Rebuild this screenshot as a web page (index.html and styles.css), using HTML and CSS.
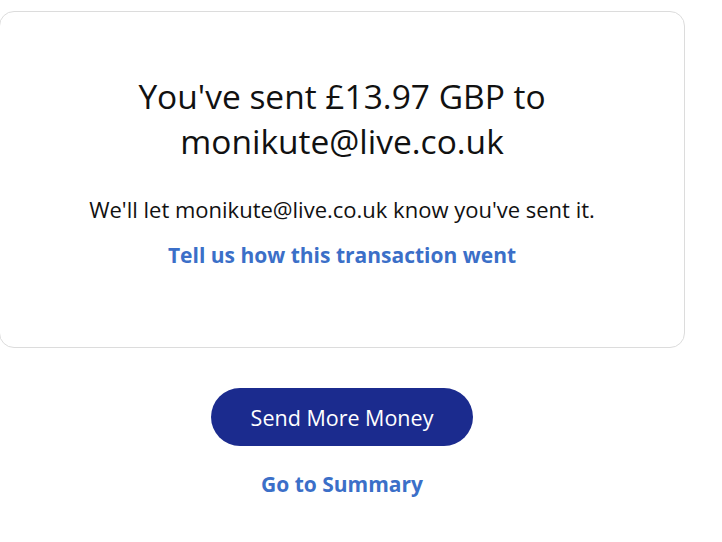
FILE: index.html
```html
<!DOCTYPE html>
<html lang="en">
<head>
<meta charset="utf-8">
<title>Sent</title>
<link rel="stylesheet" href="styles.css">
</head>
<body>
<main class="page">
  <section class="card">
    <h1 class="title">You've sent £13.97 GBP to<br>monikute@live.co.uk</h1>
    <p class="note">We'll let monikute@live.co.uk know you've sent it.</p>
    <a class="link" href="#">Tell us how this transaction went</a>
  </section>
  <div class="actions">
    <a class="btn" href="#">Send More Money</a>
    <a class="link link-summary" href="#">Go to Summary</a>
  </div>
</main>
</body>
</html>
```
FILE: styles.css
```css
html, body {
  margin: 0;
  padding: 0;
  background: #ffffff;
}
body {
  font-family: "Open Sans", "Liberation Sans", sans-serif;
  color: #111111;
}
.page {
  width: 686px;
  padding-top: 11px;
  margin-left: -1px;
}
.card {
  box-sizing: border-box;
  height: 337px;
  border: 1px solid #dcdcdc;
  border-radius: 15px;
  display: flex;
  flex-direction: column;
  align-items: center;
  padding-top: 62px;
}
.title {
  margin: 0;
  font-size: 33.5px;
  font-weight: 400;
  line-height: 45px;
  text-align: center;
}
.note {
  margin: 32px 0 0;
  font-size: 22px;
  line-height: 26px;
}
.link {
  color: #3b6fc8;
  font-weight: 700;
  text-decoration: none;
  font-size: 21px;
  line-height: 26px;
}
.card .link {
  margin-top: 20px;
}
.actions {
  display: flex;
  flex-direction: column;
  align-items: center;
  padding-top: 40px;
}
.btn {
  display: flex;
  align-items: center;
  justify-content: center;
  width: 262px;
  height: 58px;
  border-radius: 29px;
  background: #1b2b8e;
  color: #ffffff;
  text-decoration: none;
  font-size: 21.5px;
}
.link-summary {
  margin-top: 25px;
}
```
